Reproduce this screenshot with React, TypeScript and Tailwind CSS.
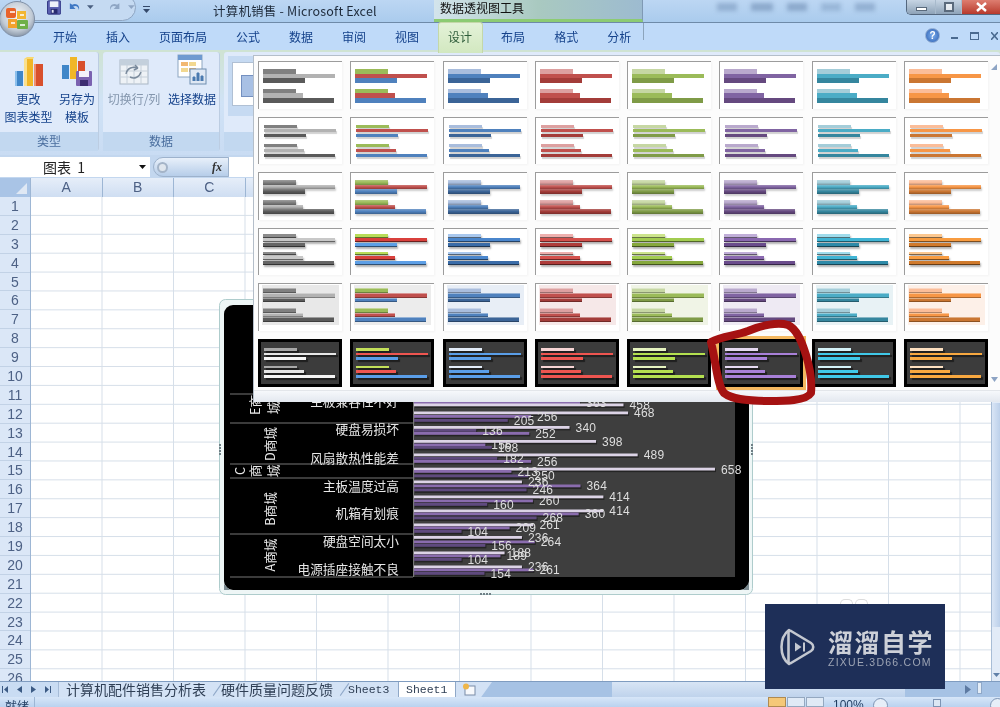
import React from 'react'

const cjk = "font-['Noto_Sans_CJK_SC','Liberation_Sans',sans-serif]"

const TABS = ['开始', '插入', '页面布局', '公式', '数据', '审阅', '视图', '设计', '布局', '格式', '分析']

// flat colours on top, the dark theme row below
const PALETTE = [
  { bars: ['bg-[#808080]', 'bg-[#b2b2b2]', 'bg-[#5a5a5a]'], dark: ['bg-[#a8a8a8]', 'bg-[#e6e6e6]', 'bg-[#f5f5f5]'], bevel: ['bg-[#8c8c8c]', 'bg-[#c8c8c8]', 'bg-[#666666]'], tint: 'bg-[#e8e8e8]' },
  { bars: ['bg-[#9bbb59]', 'bg-[#c0504d]', 'bg-[#4f81bd]'], dark: ['bg-[#c3e05a]', 'bg-[#ee5550]', 'bg-[#5a9ee8]'], bevel: ['bg-[#b8dc58]', 'bg-[#d9403c]', 'bg-[#5d9fe6]'], tint: 'bg-[#ececec]' },
  { bars: ['bg-[#a9bddd]', 'bg-[#4f81bd]', 'bg-[#3b6497]'], dark: ['bg-[#e2ecf8]', 'bg-[#5a9ee8]', 'bg-[#5a9ee8]'], bevel: ['bg-[#a9c8ee]', 'bg-[#4a86cc]', 'bg-[#3a6ca8]'], tint: 'bg-[#e8eef6]' },
  { bars: ['bg-[#dda0a0]', 'bg-[#c0504d]', 'bg-[#a33c39]'], dark: ['bg-[#f6d4d4]', 'bg-[#ee5550]', 'bg-[#ee5550]'], bevel: ['bg-[#eeb0ae]', 'bg-[#d4504c]', 'bg-[#ae3c3a]'], tint: 'bg-[#f6e8e8]' },
  { bars: ['bg-[#c6d7a3]', 'bg-[#9bbb59]', 'bg-[#7f9b47]'], dark: ['bg-[#e6f4c0]', 'bg-[#b4e050]', 'bg-[#b4e050]'], bevel: ['bg-[#cce48c]', 'bg-[#a2cc50]', 'bg-[#86a83c]'], tint: 'bg-[#f0f4e6]' },
  { bars: ['bg-[#b9a9cd]', 'bg-[#8064a2]', 'bg-[#65497f]'], dark: ['bg-[#e6daf2]', 'bg-[#a880d8]', 'bg-[#a880d8]'], bevel: ['bg-[#c0aed8]', 'bg-[#8a68b0]', 'bg-[#6a4c8c]'], tint: 'bg-[#eeeaf3]' },
  { bars: ['bg-[#a4cdd9]', 'bg-[#4bacc6]', 'bg-[#35869e]'], dark: ['bg-[#d4f2f8]', 'bg-[#40c8e8]', 'bg-[#40c8e8]'], bevel: ['bg-[#a0dcec]', 'bg-[#40b4d4]', 'bg-[#2e8aa8]'], tint: 'bg-[#e8f2f5]' },
  { bars: ['bg-[#fbbd99]', 'bg-[#f79646]', 'bg-[#ca7632]'], dark: ['bg-[#fde0c0]', 'bg-[#f8a840]', 'bg-[#f8a840]'], bevel: ['bg-[#fcc890]', 'bg-[#f89c40]', 'bg-[#d07a2c]'], tint: 'bg-[#fdf0e8]' },
]

const WIDTHS = ['w-[33px]', 'w-[72px]', 'w-[42px]', 'w-[33px]', 'w-[40px]', 'w-[71px]']

const ROW_STYLE = [
  { wrap: 'pt-[7px] pl-[4px]', bar: 'h-[4.6px]', gap: 'h-[6px]' },
  { wrap: 'pt-[7px] pl-[5px]', bar: 'h-[3px] mb-[1.6px] shadow-[1px_2px_1px_rgba(0,0,0,0.18)]', gap: 'h-[6px]' },
  { wrap: 'pt-[7px] pl-[4px]', bar: 'h-[4.6px] bg-linear-to-b from-white/25 via-transparent to-black/25 shadow-[1px_2px_2px_rgba(0,0,0,0.2)]', gap: 'h-[6px]' },
  { wrap: 'pt-[5px] pl-[4px]', bar: 'h-[3.8px] mb-[0.8px] border-b border-black/50 shadow-[1px_2px_2px_rgba(0,0,0,0.3)]', gap: 'h-[4px]' },
  { wrap: 'pt-[7px] pl-[4px]', bar: 'h-[4.6px] border-t border-white/40 border-b border-b-black/30', gap: 'h-[6px]' },
  { wrap: 'pt-[6px] pl-[3px]', bar: 'h-[2.6px] mb-[2px] shadow-[2px_2px_1px_rgba(0,0,0,0.5)]', gap: 'h-[4px]' },
]

const Thumb = ({ row, col }: { row: number; col: number }) => {
  const p = PALETTE[col]
  const s = ROW_STYLE[row]
  const colors = row === 5 ? p.dark : row === 3 ? p.bevel : p.bars
  const frame =
    row === 5
      ? 'border-[3px] border-black bg-[#3c3c3c]'
      : 'border-t border-l border-[#9c9c9c] shadow-[1px_1px_2px_rgba(0,0,0,0.04)] bg-white'
  const panel = row === 4 ? `${p.tint} mr-[3px] mb-[5px] mt-[2px] ml-[3px] h-[40px] -translate-y-[1px]` : ''
  return (
    <div className={`h-full overflow-hidden ${frame}`}>
      <div className={panel}>
        <div className={row === 4 ? 'pt-[3px] pl-[1px]' : s.wrap}>
          {WIDTHS.map((w, i) => (
            <React.Fragment key={i}>
              {i === 3 && <div className={s.gap} />}
              <div className={`${w} ${s.bar} ${colors[i % 3]}`} />
            </React.Fragment>
          ))}
        </div>
      </div>
    </div>
  )
}

const Gallery = () => (
  <div className="absolute left-[253px] top-[55px] w-[747px] h-[347px] bg-[#fcfcfc] border-l border-t border-[#b4bec9] flex flex-col">
    <div className="relative flex-1 pl-[4px] pt-[5px]">
      <div className="grid grid-cols-[repeat(8,84px)] grid-rows-[repeat(6,47.6px)] gap-x-[8.3px] gap-y-[8px]">
        {[0, 1, 2, 3, 4, 5].map((row) =>
          PALETTE.map((_, col) => (
            <div key={col} className={row === 5 && col === 5 ? 'h-full outline-[3px] outline-[#f4b860]' : 'h-full'}>
              <Thumb row={row} col={col} />
            </div>
          )),
        )}
      </div>
      <svg className="absolute right-[1px] top-[6px]" width="9" height="10" viewBox="0 0 9 10">
        <path d="M7 2 L7 8 L1 8 Z" fill="#8da4c4" />
      </svg>
      <svg className="absolute right-[1px] bottom-[5px]" width="9" height="10" viewBox="0 0 9 10">
        <path d="M1 2 L8 2 L4.5 7 Z" fill="#8da4c4" />
      </svg>
    </div>
    <div className="h-[12px] bg-linear-to-b from-[#f6f8fb] to-[#e3e8ef] border-t border-[#e3e6ea]" />
  </div>
)

const LIGHT = 'fill-[#dcd3e6]'
const MID = 'fill-[#8a6cae]'
const DEEP = 'fill-[#5f4a7e]'

// value, y of the bar, colour
const BARS: [number, number, string][] = [
  [363, 401.5, MID], [458, 403.5, LIGHT],
  [468, 411.5, LIGHT], [256, 415, MID], [205, 419, DEEP],
  [340, 426, LIGHT], [136, 429, DEEP], [252, 432, MID],
  [398, 440, LIGHT], [156, 443.5, MID], [170, 446, DEEP],
  [489, 453.5, LIGHT], [182, 457, DEEP], [256, 460, MID],
  [658, 467.7, LIGHT], [213, 470, MID], [250, 474.5, DEEP],
  [236, 480.5, LIGHT], [364, 484.5, MID], [246, 488.5, DEEP],
  [414, 495.5, LIGHT], [260, 499.5, MID], [160, 503, DEEP],
  [414, 509.5, LIGHT], [360, 512.5, MID], [268, 516.5, DEEP],
  [261, 523.5, LIGHT], [209, 526.5, MID], [104, 530, DEEP],
  [236, 536, LIGHT], [264, 540.5, MID], [156, 544, DEEP],
  [198, 551.5, LIGHT], [189, 554.5, MID], [104, 558, DEEP],
  [236, 565.5, LIGHT], [261, 568.5, MID], [154, 572, DEEP],
]

const LABELS: [string, number][] = [
  ['主板兼容性不好', 401],
  ['硬盘易损坏', 429],
  ['风扇散热性能差', 458],
  ['主板温度过高', 486],
  ['机箱有划痕', 513],
  ['硬盘空间太小', 541],
  ['电源插座接触不良', 569],
]

const GROUPS: [string, number][] = [['D商城', 444], ['B商城', 509], ['A商城', 555]]
const SPLITS = [394, 423, 464, 478, 534, 577]

const Chart = () => (
  <svg className={`absolute left-[215px] top-[295px] ${cjk}`} width="545" height="305" viewBox="215 295 545 305">
    <rect x="219.5" y="299.5" width="533" height="295" rx="6" fill="#eef6f6" stroke="#aecccc" />
    <rect x="224" y="305" width="525" height="285" rx="9" fill="#000" />
    <rect x="414" y="380" width="321" height="197" fill="#3e3e3e" />
    <line x1="413.5" y1="380" x2="413.5" y2="577" stroke="#777" />
    {SPLITS.map((y) => (
      <line key={y} x1="230" y1={y} x2="413" y2={y} stroke="#777" />
    ))}
    {BARS.map(([v, y, c], i) => (
      <g key={i}>
        <rect x="415" y={y + 1} width={v * 0.4574} height="3.4" fill="#242424" />
        <rect x="414" y={y} width={v * 0.4574} height="2.8" className={c} />
      </g>
    ))}
    {BARS.map(([v, y], i) => (
      <text key={i} x={420 + v * 0.4574} y={y + 5.8} className="fill-[#dedede] text-[12px] tracking-[0.2px] font-['Liberation_Sans',sans-serif]">
        {v === 170 ? '168' : v === 198 ? '188' : v}
      </text>
    ))}
    {LABELS.map(([t, y]) => (
      <text key={t} x="399" y={y + 5} textAnchor="end" className="fill-[#e8e8e8] text-[12.7px]">{t}</text>
    ))}
    {GROUPS.map(([t, y]) => (
      <text key={t} x="0" y="0" textAnchor="middle" transform={`translate(275 ${y}) rotate(-90)`} className="fill-[#e8e8e8] text-[12.7px]">{t}</text>
    ))}
    <text textAnchor="middle" transform="translate(260 405) rotate(-90)" className="fill-[#e8e8e8] text-[12.7px]">E商</text>
    <text textAnchor="middle" transform="translate(278 408) rotate(-90)" className="fill-[#e8e8e8] text-[12.7px]">城</text>
    <text textAnchor="middle" transform="translate(245 471) rotate(-90)" className="fill-[#e8e8e8] text-[12.7px]">C</text>
    <text textAnchor="middle" transform="translate(260 471) rotate(-90)" className="fill-[#e8e8e8] text-[12.7px]">商</text>
    <text textAnchor="middle" transform="translate(278 471) rotate(-90)" className="fill-[#e8e8e8] text-[12.7px]">城</text>
    <g fill="#6f7f86">
      {[444, 447, 450, 453].map((y) => (
        <React.Fragment key={y}>
          <rect x="219" y={y} width="2" height="2" />
          <rect x="751" y={y} width="2" height="2" />
        </React.Fragment>
      ))}
      {[480, 483, 486, 489].map((x) => <rect key={x} x={x} y="593" width="2" height="2" />)}
    </g>
    <path d="M743 590 L749 583 L749 590 Z M224 584 L230 590 L224 590 Z" fill="#7b8a90" />
  </svg>
)

const OfficeButton = () => (
  <svg className="absolute left-0 top-0" width="38" height="42" viewBox="0 0 38 42">
    <defs>
      <radialGradient id="orb" cx="50%" cy="40%" r="60%">
        <stop offset="0%" stopColor="#f7f9fb" />
        <stop offset="70%" stopColor="#c2cbd6" />
        <stop offset="100%" stopColor="#8a97a8" />
      </radialGradient>
    </defs>
    <circle cx="17" cy="19" r="17.5" fill="url(#orb)" stroke="#7f8fa6" />
    <rect x="6" y="8" width="10" height="10" rx="2" fill="#e8622a" />
    <rect x="17" y="11" width="9" height="8" fill="#f2b632" />
    <rect x="8" y="19" width="9" height="9" fill="#f2a22e" />
    <rect x="17" y="20" width="11" height="9" rx="1" fill="#6fb048" />
    <path d="M10 12 h5 M20 15 h4 M11 23 h4 M20 25 h5" stroke="#fff" strokeWidth="1.5" />
  </svg>
)

const SaveIcon = () => (
  <svg width="15" height="15" viewBox="0 0 15 15">
    <rect x="0.5" y="0.5" width="14" height="14" rx="1" fill="#5a5fb0" stroke="#2d3380" />
    <rect x="3" y="1" width="9" height="6" fill="#eef0fa" />
    <rect x="4" y="9" width="7" height="5" fill="#26296e" />
    <rect x="5" y="10" width="2" height="3" fill="#dfe2f4" />
  </svg>
)

const Caret = ({ cls = 'fill-[#4a5f80]' }: { cls?: string }) => (
  <svg width="7" height="5" viewBox="0 0 7 5"><path d="M0 0 H7 L3.5 4 Z" className={cls} /></svg>
)

const TitleBar = () => (
  <div className="relative h-[22px] flex bg-linear-to-b from-[#bcd6f3] to-[#aacbed]">
    <div className="absolute left-[20px] -top-[6px] w-[116px] h-[27px] rounded-r-full border border-[#8ea5c2] bg-[#c5daf2] flex items-center pl-[26px] gap-[6px]">
      <SaveIcon />
      <svg width="15" height="14" viewBox="0 0 15 14"><path d="M3 2 V8 H9 L6.5 5.5 C9 4 12 5 12.5 9 C14 5 10 1 5.5 3.5 Z" fill="#3f78c4" /></svg>
      <Caret />
      <svg className="ml-[8px]" width="15" height="14" viewBox="0 0 15 14"><path d="M12 2 V8 H6 L8.5 5.5 C6 4 3 5 2.5 9 C1 5 5 1 9.5 3.5 Z" fill="#8fa6c4" /></svg>
      <Caret cls="fill-[#8fa6c4]" />
    </div>
    <div className="absolute left-[143px] top-[6px] flex flex-col gap-[2px]">
      <div className="w-[7px] h-[1px] bg-[#34496a]" />
      <Caret cls="fill-[#34496a]" />
    </div>
    <div className={`pl-[213px] w-[434px] shrink-0 text-[12.5px] tracking-[0.2px] leading-[21px] text-[#1d2a3a] whitespace-pre ${cjk}`}>
      计算机销售 - Microsoft Excel
    </div>
    <div className={`w-[209px] shrink-0 pl-[6px] text-[12px] leading-[16px] text-[#111] overflow-hidden border-r border-[#7f99b4] border-b-[3px] border-b-[#8ccb73] bg-linear-to-r from-[#d3e4ec] via-[#a9c9c0] to-[#9dbbd0] ${cjk}`}>
      数据透视图工具
    </div>
    <div className="ml-[74px] mt-[3px] flex gap-[14px]">
      <div className="w-[20px] h-[8px] bg-[#6f8eb4]/50 blur-[2px]" />
      <div className="w-[22px] h-[8px] bg-[#6f8eb4]/60 blur-[2px]" />
      <div className="w-[20px] h-[8px] bg-[#6f8eb4]/60 blur-[2px]" />
      <div className="w-[20px] h-[8px] bg-[#6f8eb4]/40 blur-[2px]" />
      <div className="w-[20px] h-[8px] bg-[#6f8eb4]/50 blur-[2px]" />
    </div>
    <div className="absolute right-0 top-0 w-[94px] h-[15px] flex rounded-bl-[5px] border-l border-b border-[#54677e] overflow-hidden">
      <div className="w-[28px] flex items-center justify-center bg-linear-to-b from-[#c7d5e4] to-[#8ea3b8]">
        <div className="w-[11px] h-[4px] mt-[3px] bg-white border border-[#5a6a7c]" />
      </div>
      <div className="w-[26px] flex items-center justify-center bg-linear-to-b from-[#c7d5e4] to-[#8ea3b8] border-l border-[#a8bacc]">
        <div className="w-[10px] h-[10px] bg-white/70 border-2 border-[#5a6a7c]" />
      </div>
      <div className="flex-1 flex items-center justify-center bg-linear-to-b from-[#dd7d70] to-[#b8392c] border-l border-[#a8bacc] text-white">
        <svg width="11" height="10" viewBox="0 0 11 10"><path d="M1 1 L10 9 M10 1 L1 9" stroke="#fff" strokeWidth="2.4" /></svg>
      </div>
    </div>
  </div>
)

const TabRow = () => (
  <div className={`relative h-[28px] flex items-center gap-[29px] pl-[53px] bg-[#bfdaf9] border-t border-[#6e8aa8] text-[12px] text-[#15428b] ${cjk}`}>
    {TABS.map((t) =>
      t === '设计' ? (
        <div key={t} className="relative w-[24px] text-center text-[#2f5d3a]">
          <span className="absolute -left-[10px] -right-[11px] -top-[6px] -bottom-[7px] rounded-t-[3px] border border-b-0 border-[#c4d8a8] bg-linear-to-b from-[#e4f2d8] to-[#d2e8c0]" />
          <span className="relative">{t}</span>
        </div>
      ) : (
        <div key={t}>{t}</div>
      ),
    )}
    <div className="absolute left-[643px] top-0 h-[17px] w-px bg-[#8ca4bc]" />
    <div className="absolute right-[2px] top-[5px] flex items-center gap-[11px]">
      <div className="w-[15px] h-[15px] rounded-full bg-radial from-[#7fb0ee] to-[#2a5db0] border border-[#8ca8d0] text-white text-[10px] leading-[13px] text-center font-bold font-['Liberation_Sans',sans-serif]">?</div>
      <div className="w-[7px] h-[2px] mt-[5px] bg-[#4a6a90]" />
      <div className="w-[9px] h-[8px] border border-t-2 border-[#4a6a90] mx-[1px]" />
      <svg width="7" height="8" viewBox="0 0 7 8"><path d="M0 0 L7 8 M7 0 L0 8" stroke="#4a6a90" strokeWidth="1.5" /></svg>
    </div>
  </div>
)

const BarsIcon = () => (
  <svg width="30" height="30" viewBox="0 0 30 30">
    <rect x="1" y="14" width="8" height="15" fill="#3f86c8" />
    <rect x="10" y="2" width="9" height="27" fill="#f0b628" />
    <path d="M10 2 L13 0 L20 0 L19 2 Z" fill="#f8d870" />
    <rect x="20" y="7" width="9" height="22" fill="#d8502c" />
    <rect x="1" y="14" width="2" height="15" fill="#8cc0ec" />
    <rect x="10" y="2" width="3" height="27" fill="#fae08c" />
    <rect x="20" y="7" width="2" height="22" fill="#f09070" />
  </svg>
)

const SaveTemplateIcon = () => (
  <svg width="32" height="30" viewBox="0 0 32 30">
    <rect x="1" y="9" width="7" height="14" fill="#3f86c8" />
    <rect x="9" y="1" width="7" height="22" fill="#f0b628" />
    <rect x="17" y="5" width="7" height="18" fill="#d8502c" />
    <rect x="15" y="15" width="16" height="15" rx="1" fill="#7b62b0" />
    <rect x="18" y="15" width="10" height="6" fill="#f3f0fa" />
    <rect x="19" y="24" width="8" height="6" fill="#3c2d70" />
  </svg>
)

const Ribbon = () => (
  <div className={`h-[105px] flex gap-[4px] pl-0 pt-[2px] pb-[4px] bg-linear-to-b from-[#cfe3d2] via-[#d0e2f6] to-[#c9dcf3] text-[12px] ${cjk}`}>
    <div className="w-[99px] flex flex-col rounded-r-[3px] bg-[#dfeafa] border-r border-[#bccde2]">
      <div className="flex-1 flex text-[#15428b] text-center leading-[18px]">
        <div className="w-[56px] flex flex-col items-center pt-[5px] pl-[1px]">
          <BarsIcon />
          <div className="mt-[3px]">更改</div>
          <div className="whitespace-nowrap">图表类型</div>
        </div>
        <div className="flex-1 flex flex-col items-center pt-[4px]">
          <SaveTemplateIcon />
          <div className="mt-[4px] whitespace-nowrap">另存为</div>
          <div>模板</div>
        </div>
      </div>
      <div className="h-[19px] bg-[#c2d8f0] text-center text-[#4a6e9e] leading-[18px]">类型</div>
    </div>
    <div className="w-[117px] flex flex-col rounded-[3px] bg-[#dfeafa] border-r border-[#bccde2]">
      <div className="flex-1 flex text-center leading-[18px]">
        <div className="w-[62px] flex flex-col items-center pt-[6px] text-[#8496ad]">
          <svg width="30" height="28" viewBox="0 0 30 28">
            <rect x="1" y="2" width="28" height="24" fill="#eef2f6" stroke="#a9b6c4" />
            <path d="M1 7 H29 M1 13 H29 M1 19 H29 M8 2 V26 M15 2 V26 M22 2 V26" stroke="#c6d0da" />
            <rect x="1" y="2" width="28" height="5" fill="#c4d0dc" />
            <path d="M7 16 C8 10 14 8 19 10 M19 10 L16 7 M19 10 L15 12 M22 14 C20 20 15 21 11 19" stroke="#7a8a9c" strokeWidth="1.4" fill="none" />
          </svg>
          <div className="mt-[4px] whitespace-nowrap">切换行/列</div>
        </div>
        <div className="flex-1 flex flex-col items-center pt-[2px] text-[#15428b]">
          <svg width="30" height="32" viewBox="0 0 30 32">
            <rect x="1" y="1" width="24" height="22" fill="#fff" stroke="#8ea6c0" />
            <rect x="1" y="1" width="24" height="5" fill="#6f9ad0" />
            <rect x="4" y="8" width="7" height="4" fill="#f2b870" />
            <rect x="12" y="8" width="7" height="4" fill="#f2d890" />
            <rect x="4" y="14" width="7" height="4" fill="#f2d890" />
            <rect x="12" y="14" width="7" height="4" fill="#f2b870" />
            <rect x="13" y="15" width="16" height="15" fill="#dfe8f4" stroke="#6f8eb0" />
            <path d="M16 27 V23 H18 V27 M20 27 V19 H22 V27 M24 27 V22 H26 V27" stroke="#4a7ab0" fill="#4a7ab0" />
          </svg>
          <div className="mt-[4px] whitespace-nowrap">选择数据</div>
        </div>
      </div>
      <div className="h-[19px] bg-[#c2d8f0] text-center text-[#4a6e9e] leading-[18px]">数据</div>
    </div>
    <div className="flex-1 flex flex-col rounded-[3px] bg-[#dfeafa]">
      <div className="flex-1 pl-[4px] pt-[4px]">
        <div className="w-[30px] h-[60px] bg-[#c6daf2] pl-[4px] pt-[6px]">
          <div className="w-[26px] h-[44px] bg-white border border-[#b0c0d4]">
            <div className="mt-[12px] ml-[8px] w-[14px] h-[22px] bg-[#a8c0e4] border border-[#7490c0]" />
          </div>
        </div>
      </div>
      <div className="h-[19px] bg-[#c2d8f0]" />
    </div>
  </div>
)

const FormulaBar = () => (
  <div className={`h-[23px] flex bg-[#c3d7ef] pt-[2px] pb-[1px] ${cjk}`}>
    <div className="relative w-[150px] bg-white text-[14px] leading-[20px] text-[#222] pl-[43px] whitespace-pre">
      图表  1
      <div className="absolute right-[4px] top-[8px]"><Caret cls="fill-[#111]" /></div>
    </div>
    <div className="ml-[3px] w-[76px] flex items-center justify-between rounded-l-full border border-[#9db2cc] bg-linear-to-b from-[#e8f0fa] to-[#b6cde9] pl-[3px] pr-[6px]">
      <div className="w-[11px] h-[11px] rounded-full border-2 border-[#a4b4c8] bg-[#dfe6ee]" />
      <span className="italic font-bold text-[12px] text-[#333] font-['Liberation_Serif',serif]">fx</span>
    </div>
    <div className="flex-1 bg-white" />
  </div>
)

const ColHeader = () => (
  <div className="h-[19px] flex text-[14px] leading-[19px] text-[#4d6185] font-['Liberation_Sans',sans-serif]">
    <div className="relative w-[31px] bg-[#a9c4e6] border-r border-[#9db6d4]">
      <svg className="absolute right-[3px] bottom-[3px]" width="11" height="11" viewBox="0 0 11 11"><path d="M11 0 V11 H0 Z" fill="#dfe8f4" /></svg>
    </div>
    {['A', 'B', 'C', 'D', 'E', 'F', 'G', 'H', 'I', 'J', 'K', 'L', 'M'].map((c) => (
      <div key={c} className="w-[71.5px] shrink-0 text-center bg-linear-to-b from-[#e6eef9] to-[#cfdef2] border-r border-[#9db6d4]">{c}</div>
    ))}
  </div>
)

const Sheet = () => (
  <div className="relative flex-1 flex overflow-hidden">
    <div className="w-[31px] shrink-0 bg-[#dbe7f7] border-r border-[#9db6d4] text-[14px] leading-[18.9px] text-center text-[#4d6185] font-['Liberation_Sans',sans-serif]">
      {Array.from({ length: 26 }, (_, i) => (
        <div key={i} className="h-[18.9px] border-b border-[#c2d2e6]">{i + 1}</div>
      ))}
    </div>
    <div className="flex-1 bg-white bg-[linear-gradient(to_right,#d6dfe9_1px,transparent_1px),linear-gradient(to_bottom,#d6dfe9_1px,transparent_1px)] bg-[size:71.5px_18.9px] bg-[position:-1px_-1px]" />
    <div className="w-[9px] shrink-0 flex flex-col bg-[#e2ebf7] border-l border-[#a8bdd6]">
      <div className="h-[224px] mt-[206px] bg-linear-to-r from-[#d9e5f5] to-[#bcd0ea]" />
      <div className="mt-auto mb-[3px] ml-[1px]">
        <Caret cls="fill-[#6080a8]" />
      </div>
    </div>
  </div>
)

const TabBar = () => (
  <div className="h-[16px] flex items-stretch bg-[#a6c2e4] border-t border-[#7f9cc0]">
    <div className="w-[58px] flex items-center gap-[9px] pl-[2px] bg-[#c9dcf3]">
      <svg width="6" height="7" viewBox="0 0 6 7"><path d="M0 0 H1 V7 H0 Z M6 0 V7 L2 3.5 Z" fill="#3b5a84" /></svg>
      <svg width="5" height="7" viewBox="0 0 5 7"><path d="M5 0 V7 L0 3.5 Z" fill="#3b5a84" /></svg>
      <svg width="5" height="7" viewBox="0 0 5 7"><path d="M0 0 V7 L5 3.5 Z" fill="#3b5a84" /></svg>
      <svg width="6" height="7" viewBox="0 0 6 7"><path d="M5 0 H6 V7 H5 Z M0 0 V7 L4 3.5 Z" fill="#3b5a84" /></svg>
    </div>
    <div className={`relative w-[163px] bg-[#d3e2f5] pl-[7px] text-[14px] leading-[15px] text-[#2f3f55] whitespace-nowrap border-l border-[#a6bcd8] ${cjk}`}>
      计算机配件销售分析表
      <span className="absolute right-[3px] top-0 h-full w-px bg-[#8fa8c8] rotate-[35deg]" />
    </div>
    <div className={`relative w-[127px] bg-[#d3e2f5] text-[14px] leading-[15px] text-[#2f3f55] whitespace-nowrap ${cjk}`}>
      硬件质量问题反馈
      <span className="absolute right-[3px] top-0 h-full w-px bg-[#8fa8c8] rotate-[35deg]" />
    </div>
    <div className="w-[50px] bg-[#d3e2f5] text-[11.5px] leading-[15px] text-[#2f3f55] font-['Liberation_Mono',monospace]">Sheet3</div>
    <div className="w-[58px] bg-white pl-[7px] text-[11.5px] leading-[15px] text-[#2f3f55] border-x border-[#8fa8c8] font-['Liberation_Mono',monospace]">Sheet1</div>
    <div className="w-[36px] bg-[#d3e2f5] pl-[6px] pt-[1px] [clip-path:polygon(0_0,100%_0,70%_100%,0_100%)]">
      <svg width="14" height="13" viewBox="0 0 14 13">
        <rect x="3" y="3" width="10" height="9" fill="#f7f9fc" stroke="#7a8ca8" />
        <circle cx="4" cy="3.5" r="3" fill="#eeb64a" />
      </svg>
    </div>
    <div className="w-[120px]" />
    <div className="flex-1 flex">
      <div className="w-[293px] bg-linear-to-b from-[#d8e5f5] to-[#bfd3ec] flex items-center justify-end pr-0">
        <div className="w-[6px]" />
      </div>
      <div className="w-[60px]" />
      <svg className="mt-[3px]" width="6" height="9" viewBox="0 0 6 9"><path d="M0 0 L6 4.5 L0 9 Z" fill="#5d7aa2" /></svg>
      <div className="ml-[6px] w-[5px] h-[12px] bg-white/70 border border-[#8fa8c8]" />
    </div>
  </div>
)

const StatusBar = () => (
  <div className={`relative h-[10px] overflow-hidden bg-linear-to-b from-[#d7e6f8] to-[#bad2ef] text-[12px] leading-[18px] text-[#1e3a5f] pl-[5px] ${cjk}`}>
    就绪
    <div className="absolute left-[34px] top-0 h-full w-px bg-[#9db6d4]" />
    <div className="absolute left-[768px] top-0 flex gap-[1px]">
      <div className="w-[18px] h-[10px] bg-[#f5c878] border border-[#b08a50]" />
      <div className="w-[18px] h-[10px] bg-[#e0eaf6] border border-[#94a8c0]" />
      <div className="w-[18px] h-[10px] bg-[#e0eaf6] border border-[#94a8c0]" />
    </div>
    <div className="absolute left-[833px] top-[1px] text-[12px] leading-[14px] font-['Liberation_Sans',sans-serif]">100%</div>
    <div className="absolute left-[873px] top-[1px] w-[15px] h-[15px] rounded-full bg-[#e6eef8] border border-[#7d94b4]" />
    <div className="absolute left-[933px] top-[2px] w-[8px] h-[8px] bg-[#dce7f4] border border-[#7d94b4]" />
    <div className="absolute left-[990px] top-[1px] w-[15px] h-[15px] rounded-full bg-[#e6eef8] border border-[#7d94b4]" />
  </div>
)

const Watermark = () => (
  <div className="absolute left-[765px] top-[604px] w-[180px] h-[85px] bg-[#1e2f58] flex items-center pl-[15px] gap-[13px]">
    <div className="absolute left-[75px] -top-[5px] flex gap-[2px]">
      <div className="w-[13px] h-[5px] rounded-t-full border border-b-0 border-[#dcdcdc]" />
      <div className="w-[13px] h-[5px] rounded-t-full border border-b-0 border-[#dcdcdc]" />
    </div>
    <svg width="35" height="38" viewBox="0 0 35 38" fill="none">
      <path d="M9 2 C5 5 1.5 10 1.5 19 C1.5 28 5 33 9 36" stroke="#c4c8d0" strokeWidth="2.6" strokeLinecap="round" />
      <path d="M11 3 L31 15 C34 17 34 21 31 23 L11 35 Q8.5 36 8.5 33 V5 Q8.5 2 11 3 Z" stroke="#c4c8d0" strokeWidth="2.6" strokeLinejoin="round" />
      <path d="M15 14.5 L21.5 19 L15 23.5 Z" fill="#c4c8d0" />
      <rect x="23" y="14.5" width="2" height="9" fill="#c4c8d0" />
    </svg>
    <div className="flex flex-col">
      <div className={`text-[25px] leading-[30px] font-bold tracking-[1.5px] whitespace-nowrap text-[#cdd0d8] ${cjk}`}>溜溜自学</div>
      <div className="text-[10.5px] leading-[12px] tracking-[1.25px] whitespace-nowrap text-[#9da4b4] font-['Liberation_Sans',sans-serif]">ZIXUE.3D66.COM</div>
    </div>
  </div>
)

const App = () => {
  return (
    <div className="relative w-[1000px] h-[707px] overflow-hidden flex flex-col bg-white blur-[0.45px]">
      <TitleBar />
      <TabRow />
      <Ribbon />
      <FormulaBar />
      <ColHeader />
      <Sheet />
      <TabBar />
      <StatusBar />

      <OfficeButton />
      <Chart />
      <Gallery />
      {/* hand drawn red circle around the selected style */}
      <svg className="absolute left-[700px] top-[315px]" width="125" height="95" viewBox="700 315 125 95" fill="none">
        <path
          d="M711 342 C722 336 735 336 748 331 C762 325 778 322 788 325 C797 329 802 342 806 355 C810 368 812 382 811 393 C806 401 785 401 768 401 C750 401 733 400 724 393 C717 385 716 362 711 342 Z"
          stroke="#a51212"
          strokeWidth="8"
          strokeLinejoin="round"
        />
      </svg>
      <Watermark />
    </div>
  )
}

export default App
